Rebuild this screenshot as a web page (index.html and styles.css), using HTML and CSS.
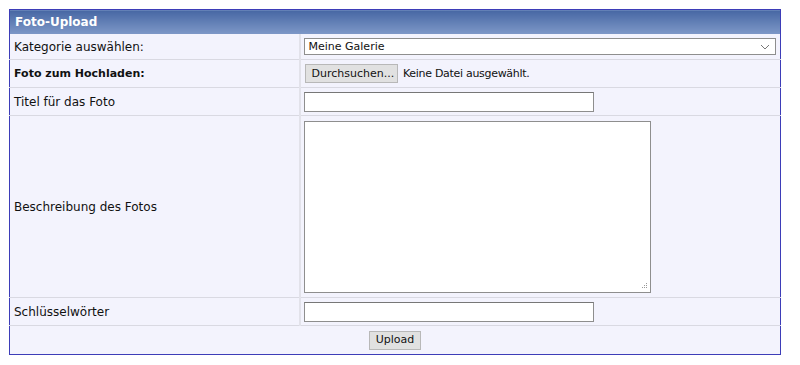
FILE: index.html
```html
<!DOCTYPE html>
<html lang="de">
<head>
    <meta charset="UTF-8">
    <meta name="viewport" content="width=device-width, initial-scale=1.0">
    <title>Foto-Upload</title>
    <link rel="stylesheet" href="styles.css">
</head>
<body>
    <form class="upload">
        <table class="upload-table">
            <colgroup>
                <col class="col-label">
                <col class="col-field">
            </colgroup>
            <tr>
                <th colspan="2" class="head">Foto-Upload</th>
            </tr>
            <tr class="row-first">
                <td class="label">Kategorie auswählen:</td>
                <td class="field">
                    <div class="select">
                        <span>Meine Galerie</span>
                        <svg width="10" height="6" viewBox="0 0 10 6"><path d="M1 1 L5 5 L9 1" fill="none" stroke="#777" stroke-width="1"/></svg>
                    </div>
                </td>
            </tr>
            <tr>
                <td class="label bold">Foto zum Hochladen:</td>
                <td class="field">
                    <span class="btn browse">Durchsuchen...</span>
                    <span class="nofile">Keine Datei ausgewählt.</span>
                </td>
            </tr>
            <tr>
                <td class="label">Titel für das Foto</td>
                <td class="field"><div class="input"></div></td>
            </tr>
            <tr>
                <td class="label">Beschreibung des Fotos</td>
                <td class="field area-cell">
                    <div class="textarea">
                        <svg class="grip" width="7" height="7" viewBox="0 0 7 7">
                            <rect x="5" y="0" width="1" height="1" fill="#999"/>
                            <rect x="3" y="2" width="1" height="1" fill="#999"/>
                            <rect x="5" y="2" width="1" height="1" fill="#999"/>
                            <rect x="1" y="4" width="1" height="1" fill="#999"/>
                            <rect x="3" y="4" width="1" height="1" fill="#999"/>
                            <rect x="5" y="4" width="1" height="1" fill="#999"/>
                        </svg>
                    </div>
                </td>
            </tr>
            <tr>
                <td class="label">Schlüsselwörter</td>
                <td class="field"><div class="input"></div></td>
            </tr>
            <tr>
                <td colspan="2" class="submit-cell"><span class="btn upload-btn">Upload</span></td>
            </tr>
        </table>
    </form>
</body>
</html>
```

FILE: styles.css
```css
body{
    margin: 0;
    padding: 9px;
    background-color: #ffffff;
    font-family: "DejaVu Sans", Verdana, sans-serif;
    color: #111;
}
.upload{
    width: 772px;
}
.upload-table{
    width: 100%;
    border: 1px solid #3d3db8;
    border-collapse: collapse;
    background-color: #f3f3fd;
    table-layout: fixed;
}
.col-label{
    width: 290px;
}
.head{
    height: 24px;
    padding: 0 5px;
    text-align: left;
    color: #ffffff;
    font-size: 12px;
    font-weight: bold;
    background: linear-gradient(#4767a4, #7e98c8);
}
.upload-table td{
    border-bottom: 1px solid #d9d9e2;
    padding: 0;
}
.label{
    height: 27px;
    padding-left: 4px !important;
    font-size: 12px;
    border-right: 2px solid #e2e2ea;
}
.bold{
    font-size: 11px;
    font-weight: bold;
}
.row-first td{
    height: 25px;
}
.field{
    padding-left: 3px !important;
    font-size: 11px;
}
.select{
    display: flex;
    align-items: center;
    justify-content: space-between;
    width: 472px;
    height: 17px;
    box-sizing: border-box;
    padding: 0 5px 0 4px;
    background-color: #fff;
    border: 1px solid #8e8e8e;
    font-size: 11px;
}
.btn{
    display: inline-block;
    box-sizing: border-box;
    padding: 2px 6px;
    background-color: #e1e1e1;
    border: 1px solid #b8b8b8;
    font-size: 11px;
    vertical-align: middle;
}
.browse{
    height: 19px;
    width: 93px;
    margin-left: 1px;
}
.nofile{
    margin-left: 2px;
    vertical-align: middle;
    letter-spacing: -0.3px;
}
.input{
    width: 290px;
    height: 20px;
    box-sizing: border-box;
    background-color: #fff;
    border: 1px solid #8e8e8e;
    border-top-color: #777;
}
.area-cell{
    height: 176px;
    padding-top: 5px !important;
    vertical-align: top;
}
.textarea{
    position: relative;
    width: 347px;
    height: 172px;
    box-sizing: border-box;
    background-color: #fff;
    border: 1px solid #8e8e8e;
}
.grip{
    position: absolute;
    right: 2px;
    bottom: 2px;
}
.submit-cell{
    height: 28px;
    text-align: center;
    border-bottom: none !important;
}
.upload-btn{
    height: 19px;
    width: 52px;
    padding: 1px 0 0;
    font-size: 11px;
}
```
